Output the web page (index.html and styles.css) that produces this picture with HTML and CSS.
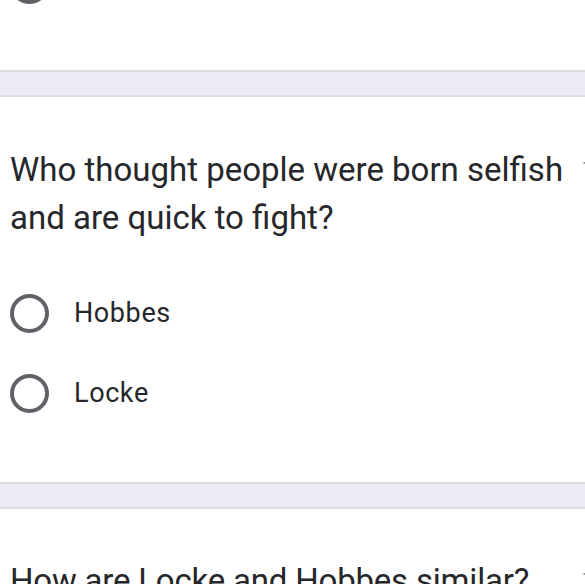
FILE: index.html
```html
<!DOCTYPE html>
<html>
<head>
<meta charset="utf-8">
<link rel="stylesheet" href="styles.css">
</head>
<body>
<div class="page">
  <section class="card card-prev">
    <div class="option"><span class="radio"></span></div>
  </section>
  <div class="band"></div>
  <section class="card">
    <div class="q-head">
      <div class="q-title">Who thought people were born selfish and are quick to fight?</div>
      <div class="q-points">1 point</div>
    </div>
    <div class="options">
      <div class="option"><span class="radio"></span><span class="label">Hobbes</span></div>
      <div class="option"><span class="radio"></span><span class="label">Locke</span></div>
    </div>
  </section>
  <div class="band"></div>
  <section class="card card-next">
    <div class="q-head">
      <div class="q-title q-short">How are Locke and Hobbes similar?</div>
      <div class="q-points">1 point</div>
    </div>
  </section>
</div>
</body>
</html>
```

FILE: styles.css
```css
html, body {
  margin: 0;
  padding: 0;
  background: #ffffff;
}
body {
  width: 585px;
  height: 584px;
  overflow: hidden;
  font-family: Roboto, "Liberation Sans", sans-serif;
  color: #202124;
}
.page {
  display: flex;
  flex-direction: column;
}
.card {
  padding: 49px 0 49px 10px;
  background: #fff;
}
.card-prev {
  margin-top: -56px;
  padding: 0 0 46px 10px;
}
.card-next {
  padding-top: 48px;
}
.band {
  height: 23px;
  background: #ecebf5;
  border-top: 2px solid #dcdbe0;
  border-bottom: 2px solid #dcdbe0;
}
.q-head {
  display: flex;
  align-items: flex-start;
  width: 700px;
}
.q-title {
  width: 560px;
  font-size: 33px;
  line-height: 48px;
  font-weight: 400;
  color: #26272a;
}
.q-short {
  letter-spacing: -0.2px;
}
.q-points {
  margin-left: 12px;
  padding-top: 12px;
  font-size: 16px;
  color: #70757a;
  white-space: nowrap;
}
.options {
  margin-top: 31px;
  display: flex;
  flex-direction: column;
}
.option {
  display: flex;
  align-items: center;
  height: 80px;
}
.radio {
  box-sizing: border-box;
  width: 39px;
  height: 39px;
  border: 4px solid #5f6368;
  border-radius: 50%;
  flex: none;
}
.label {
  margin-left: 25px;
  font-size: 27px;
  letter-spacing: 0.6px;
  color: #26272a;
}
```
